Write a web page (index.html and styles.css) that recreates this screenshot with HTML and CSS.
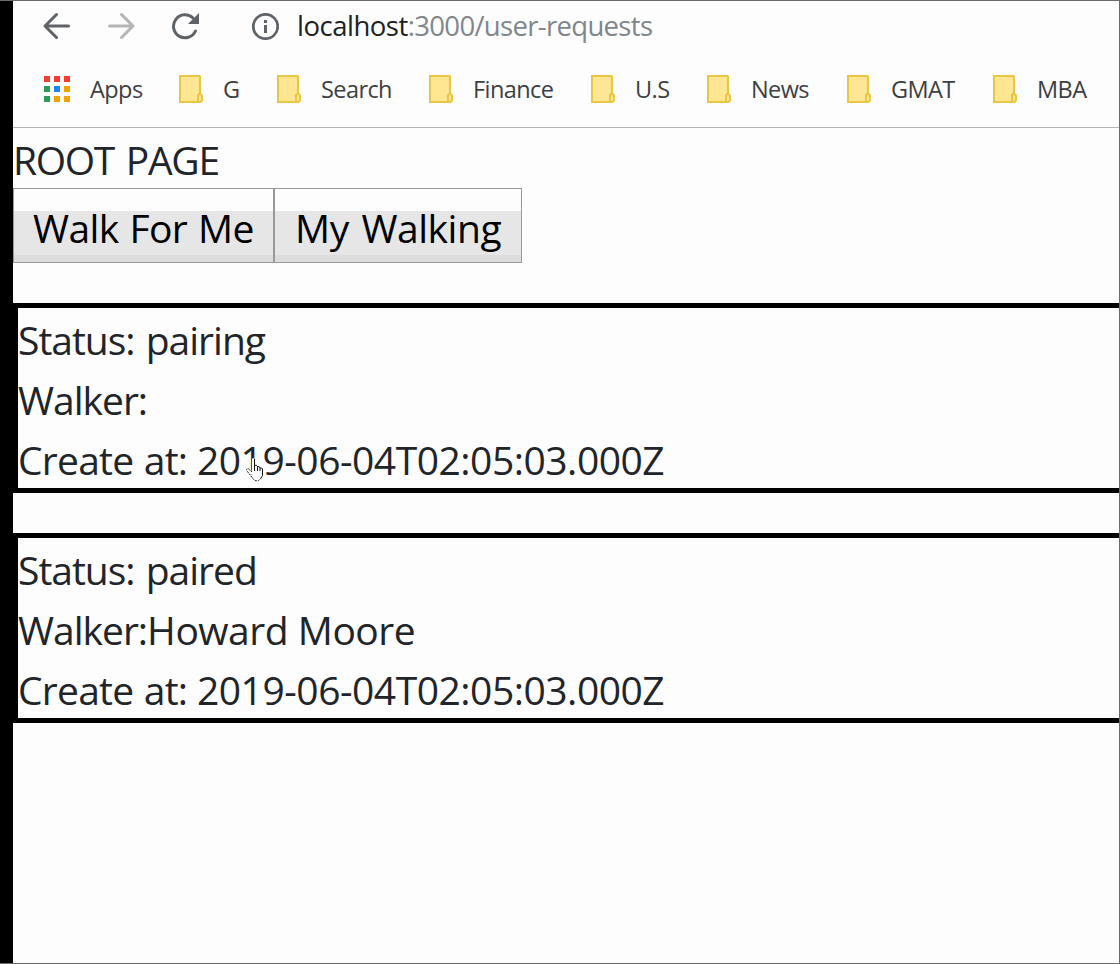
FILE: index.html
```html
<!DOCTYPE html>
<html lang="en">
<head>
<meta charset="utf-8">
<title>User requests</title>
<link rel="stylesheet" href="styles.css">
</head>
<body>
<svg class="defs" width="0" height="0">
  <symbol id="folder" viewBox="0 0 24 28">
    <path d="M1 1H20.500L21 1.500V18.500L19 20V27H1Z" fill="#ffe693" stroke="#eac645" stroke-width="2"/>
    <path d="M19 27V20.500L20.500 19H21.500L23 20.500V25.500L21.500 27Z" fill="#ffe693" stroke="#eac645" stroke-width="2"/>
  </symbol>
</svg>
<div class="window">
  <header class="chrome">
    <div class="toolbar">
      <svg class="nav-icon" width="28" height="28" viewBox="0 0 28 28" fill="none" stroke="#5f6368" stroke-width="3" stroke-linecap="round" stroke-linejoin="round"><path d="M25.500 14H2.500M13.500 2.500L2 14L13.500 25.500"/></svg>
      <svg class="nav-icon" width="28" height="28" viewBox="0 0 28 28" fill="none" stroke="#b5b5b5" stroke-width="3" stroke-linecap="round" stroke-linejoin="round"><path d="M2.500 14H25.500M14.500 2.500L26 14L14.500 25.500"/></svg>
      <svg class="nav-icon" width="28" height="28" viewBox="0 0 28 28"><path d="M22 6A11.500 11.500 0 1 0 24.500 19" fill="none" stroke="#5f6368" stroke-width="3" stroke-linecap="round"/><path d="M28 1V12H17Z" fill="#5f6368"/></svg>
      <svg class="info-icon" width="28" height="28" viewBox="0 0 28 28"><circle cx="14.500" cy="13.500" r="12.200" fill="none" stroke="#5f6368" stroke-width="2.800"/><path d="M13 7h3v3h-3zM13 12h3v8h-3z" fill="#5f6368"/></svg>
      <div class="url"><span class="host">localhost</span>:3000/user-requests</div>
    </div>
    <nav class="bookmarks">
      <a class="mark"><svg width="26" height="26" viewBox="0 0 26 26" shape-rendering="crispEdges"><path fill="#f53b30" d="M0 0h6v6H0zM10 0h6v6h-6zM20 0h6v6h-6z"/><path fill="#2d9c57" d="M0 10h6v6H0zM0 20h6v6H0z"/><path fill="#1a87f5" d="M10 10h6v6h-6z"/><path fill="#f2a300" d="M20 10h6v6h-6zM10 20h6v6h-6zM20 20h6v6h-6z"/></svg><span>Apps</span></a>
      <a class="mark"><svg width="24" height="28"><use href="#folder"/></svg><span>G</span></a>
      <a class="mark"><svg width="24" height="28"><use href="#folder"/></svg><span>Search</span></a>
      <a class="mark"><svg width="24" height="28"><use href="#folder"/></svg><span>Finance</span></a>
      <a class="mark"><svg width="24" height="28"><use href="#folder"/></svg><span>U.S</span></a>
      <a class="mark"><svg width="24" height="28"><use href="#folder"/></svg><span>News</span></a>
      <a class="mark"><svg width="24" height="28"><use href="#folder"/></svg><span>GMAT</span></a>
      <a class="mark"><svg width="24" height="28"><use href="#folder"/></svg><span>MBA</span></a>
    </nav>
  </header>
  <main class="page">
    <h1 class="title">ROOT PAGE</h1>
    <div class="actions">
      <button class="btn walk">Walk For Me</button><button class="btn mine">My Walking</button>
    </div>
    <section class="request">
      <p class="status">Status: pairing</p>
      <p><span class="label">Walker:</span></p>
      <p><span class="created">Create at:</span> 2019-06-04T02:05:03.000Z</p>
    </section>
    <section class="request">
      <p class="status">Status: paired</p>
      <p><span class="label">Walker:</span>Howard Moore</p>
      <p><span class="created">Create at:</span> 2019-06-04T02:05:03.000Z</p>
    </section>
  </main>
  <svg class="cursor" width="18" height="28" viewBox="0 0 18 28"><path d="M6 20L1 15.500Q0 13.500 2 13L6 16V4Q7 2 8 4V10.500Q10.500 9.500 11 11.500Q13 10.500 13.500 12.500Q16 11.500 16.500 14V20L13.500 25Q10 28 6.500 25Z" fill="#fff"/><path d="M8.500 4V16M8.500 10.500Q10.500 9.500 11.500 11.500V16M11.500 11.500Q13.500 11 14 13V16M14 13Q16 12.500 16.500 14V20.500L14.500 24" fill="none" stroke="#111"/><path d="M6 17L2 13.500Q0 13.500 1 16L6.500 23Q9 27 12.500 25.500L14.500 24" fill="none" stroke="#111" stroke-dasharray="2 1"/></svg>
</div>
</body>
</html>
```
FILE: styles.css
```css
* { box-sizing: border-box; }
body {
  margin: 0;
  background: #fdfdfd;
  color: #212529;
  font-family: "Open Sans", "Noto Sans", sans-serif;
}
.defs { display: block; }
.window {
  position: relative;
  height: 964px;
  overflow: hidden;
  border: solid #6b6b6b;
  border-width: 1px 1px 1px 0;
  box-shadow: inset 13px 0 #000;
  padding-left: 13px;
}
.chrome { height: 127px; border-bottom: 1px solid #b3b3b3; }
.toolbar { display: flex; align-items: center; height: 50px; padding-left: 30px; }
.nav-icon { flex: none; margin-right: 36px; }
.info-icon { flex: none; margin: 1px 18px 0 16px; }
.url { font-size: 27.500px; line-height: 50px; letter-spacing: -0.680px; color: #80868b; white-space: nowrap; }
.host { color: #202124; letter-spacing: -0.500px; }
.bookmarks {
  display: grid;
  grid-template-columns: 135px 98px 152px 162px 116px 140px 146px auto;
  align-items: center;
  height: 76px;
  padding-left: 31px;
  font-size: 23.500px;
  letter-spacing: -0.580px;
  color: #3c4043;
}
.mark { display: flex; align-items: center; white-space: nowrap; }
.mark span { margin-left: 20px; }
.title { margin: 0; padding-top: 2px; height: 60px; font-size: 39px; font-weight: 400; line-height: 60px; letter-spacing: -1.300px; word-spacing: 3px; }
.actions { display: flex; height: 75px; }
.btn {
  height: 75px;
  padding: 4px 0 0 19px;
  border: 1px solid #999;
  border-radius: 0;
  background: linear-gradient(#fdfdfd 23px, #e6e6e6 23px 67px, #dcdcdc 67px) border-box;
  color: #000;
  font: 39px/60px "Open Sans", "Noto Sans", sans-serif;
  text-align: left;
  white-space: nowrap;
}
.walk { width: 261px; letter-spacing: -0.600px; word-spacing: 1.300px; }
.mine { width: 248px; padding-left: 20px; letter-spacing: -0.450px; word-spacing: 3px; }
.request { height: 190px; margin-top: 40px; padding-top: 2px; border: solid #000; border-width: 5px 0 5px 5px; }
.request p { margin: 0; font-size: 39px; line-height: 60px; letter-spacing: -0.480px; white-space: nowrap; }
.request .status { letter-spacing: -1px; word-spacing: 2px; }
.label { letter-spacing: -1px; }
.created { letter-spacing: -0.750px; word-spacing: 1px; }
.cursor { position: absolute; left: 246px; top: 454px; }
```
